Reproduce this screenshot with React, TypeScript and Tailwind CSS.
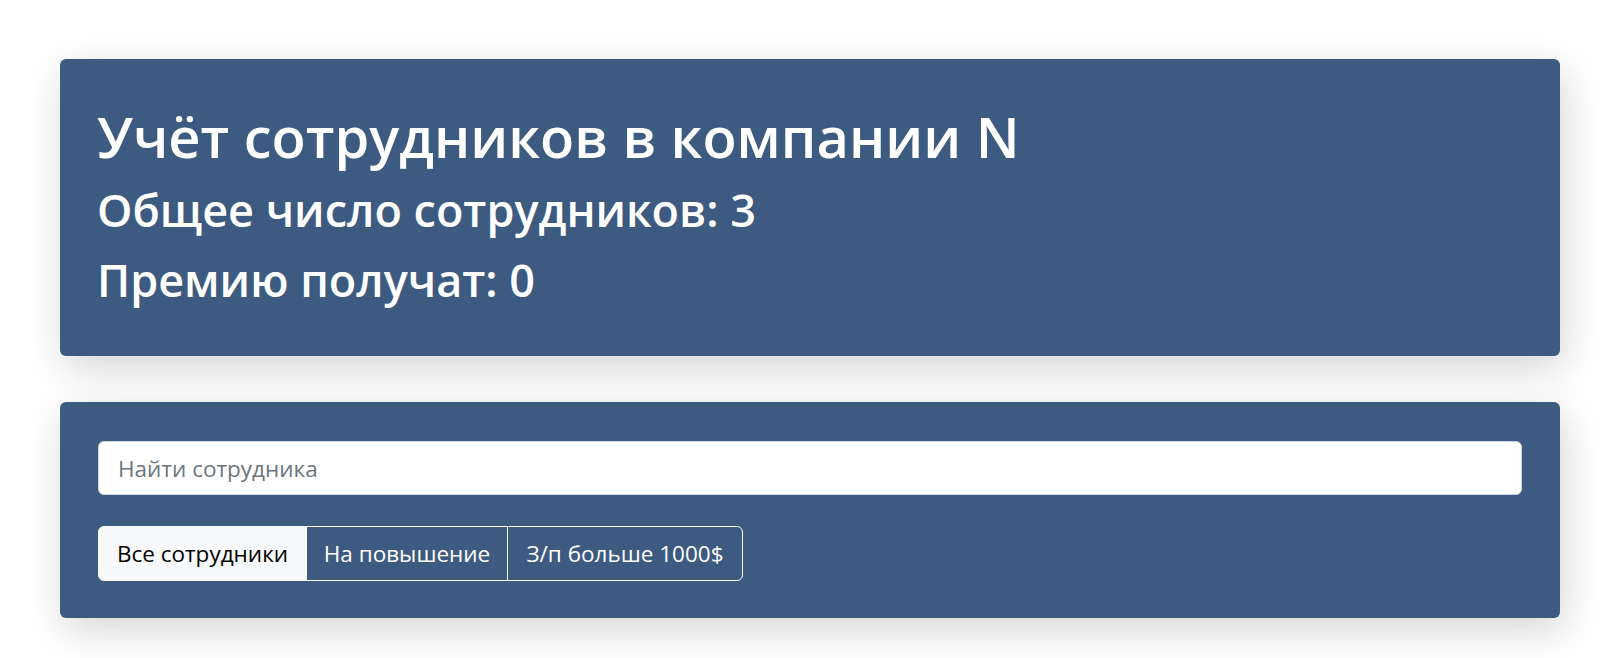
import React from "react";

export default function App() {
  const font = { fontFamily: '"Open Sans", "Noto Sans", sans-serif' };
  return (
    <div className="min-h-[658px] w-[1609px] bg-white" style={font}>
      <div className="pt-[59px] pl-[60px]">
        <div className="w-[1500px] rounded-[6px] bg-[#3d5a80] pt-[42px] pb-[41px] pl-[37px] text-white shadow-[4px_12px_40px_rgba(0,0,0,0.17)]">
          <h1 className="text-[56px] font-semibold leading-[70px]">Учёт сотрудников в компании N</h1>
          <h2 className="mt-[4px] text-[45px] font-semibold leading-[70px]">Общее число сотрудников: 3</h2>
          <h2 className="text-[45px] font-semibold leading-[70px]">Премию получат: 0</h2>
        </div>

        <div className="mt-[46px] w-[1500px] rounded-[6px] bg-[#3d5a80] px-[38px] pt-[39px] pb-[37px] shadow-[4px_12px_40px_rgba(0,0,0,0.17)]">
          <input
            type="text"
            placeholder="Найти сотрудника"
            className="block h-[54px] w-full rounded-[6px] border border-[#ced4da] bg-white px-[19px] text-[22.5px] text-[#212529] outline-none placeholder:text-[#6c757d]"
          />
          <div className="mt-[31px] flex">
            <button className="flex h-[55px] w-[209px] items-center justify-center rounded-l-[6px] border border-[#f8f9fa] bg-[#f8f9fa] text-[22.5px] text-black">
              Все сотрудники
            </button>
            <button className="-ml-px flex h-[55px] w-[202px] items-center justify-center border border-white text-[22.5px] text-white">
              На повышение
            </button>
            <button className="-ml-px flex h-[55px] w-[236px] items-center justify-center rounded-r-[6px] border border-white text-[22.5px] text-white">
              З/п больше 1000$
            </button>
          </div>
        </div>
      </div>
    </div>
  );
}
